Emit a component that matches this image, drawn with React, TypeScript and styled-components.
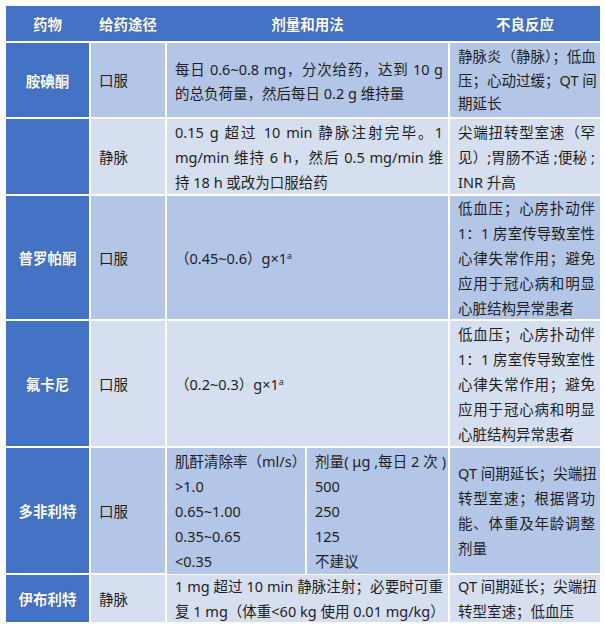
import React from 'react'
import styled, { createGlobalStyle } from 'styled-components'

const BLUE = '#4472C4'
const tones = {
  dark: '#B4C6E7',
  light: '#D6DFF0',
}

type Tone = keyof typeof tones

const COLUMNS = '83px 74px 281px 150px'

const GlobalStyle = createGlobalStyle`
  html, body {
    margin: 0;
    padding: 0;
    background: #ffffff;
  }
  body {
    font-family: "Noto Sans", "Noto Sans CJK SC", sans-serif;
    font-size: 14.5px;
    color: #1e1e1e;
  }
`

const Page = styled.div`
  padding: 6px 5px 6px 6px;
`

const Table = styled.div`
  display: grid;
  width: 594px;
  grid-template-columns: ${COLUMNS};
  grid-template-rows: 35px 74px 75px 123px 125px 125px 47px;
  gap: 2px;
  background: #ffffff;
`

const HeaderRow = styled.div`
  grid-column: 1 / -1;
  display: grid;
  grid-template-columns: ${COLUMNS};
  column-gap: 2px;
  background: ${BLUE};
`

const HeadCell = styled.div`
  display: flex;
  align-items: center;
  justify-content: center;
  color: #ffffff;
  font-weight: 700;
  text-shadow: 0 0 1px rgba(20, 40, 90, 0.6);
`

const NameCell = styled(HeadCell)`
  background: ${BLUE};
`

const Cell = styled.div<{ $tone: Tone; $leading?: number }>`
  display: flex;
  flex-direction: column;
  justify-content: center;
  padding: 1px 5px 0 8px;
  background: ${({ $tone }) => tones[$tone]};
  line-height: ${({ $leading }) => $leading ?? 25}px;
`

const Split = styled.div`
  display: grid;
  grid-template-columns: 138px 141px;
  column-gap: 2px;
`

const SubCell = styled(Cell)`
  padding: 1px 2px 0 8px;
`

const Line = styled.span<{ $fill?: boolean }>`
  display: block;
  white-space: nowrap;
  text-align: justify;
  text-align-last: ${({ $fill }) => ($fill ? 'justify' : 'left')};
`

const Sup = styled.sup`
  font-size: 0.6em;
  line-height: 0;
  vertical-align: 0.55em;
`

const Lines: React.FC<{ items: string[]; fillLast?: boolean }> = ({ items, fillLast }) => (
  <>
    {items.map((text, i) => (
      <Line key={i} $fill={fillLast || i < items.length - 1}>
        {text}
      </Line>
    ))}
  </>
)

const warning = [
  '低血压；心房扑动伴',
  '1：1 房室传导致室性',
  '心律失常作用；避免',
  '应用于冠心病和明显',
  '心脏结构异常患者',
]

export default function App() {
  return (
    <>
      <GlobalStyle />
      <Page>
        <Table lang="zh-CN">
          <HeaderRow>
            <HeadCell>药物</HeadCell>
            <HeadCell>给药途径</HeadCell>
            <HeadCell>剂量和用法</HeadCell>
            <HeadCell>不良反应</HeadCell>
          </HeaderRow>

          <NameCell>胺碘酮</NameCell>
          <Cell $tone="dark">口服</Cell>
          <Cell $tone="dark" $leading={24}>
            <Lines items={['每日 0.6~0.8 mg，分次给药，达到 10 g', '的总负荷量，然后每日 0.2 g 维持量']} />
          </Cell>
          <Cell $tone="dark" $leading={23.5}>
            <Lines items={['静脉炎（静脉）；低血', '压；心动过缓；QT 间', '期延长']} />
          </Cell>

          <NameCell />
          <Cell $tone="light">静脉</Cell>
          <Cell $tone="light">
            <Lines
              items={[
                '0.15 g 超过 10 min 静脉注射完毕。1',
                'mg/min 维持 6 h，然后 0.5 mg/min 维',
                '持 18 h 或改为口服给药',
              ]}
            />
          </Cell>
          <Cell $tone="light">
            <Lines items={['尖端扭转型室速（罕', '见）;胃肠不适 ;便秘 ;', 'INR 升高']} />
          </Cell>

          <NameCell>普罗帕酮</NameCell>
          <Cell $tone="dark">口服</Cell>
          <Cell $tone="dark">
            <Line>
              （0.45~0.6）g×1<Sup>a</Sup>
            </Line>
          </Cell>
          <Cell $tone="dark">
            <Lines items={warning} />
          </Cell>

          <NameCell>氟卡尼</NameCell>
          <Cell $tone="light">口服</Cell>
          <Cell $tone="light">
            <Line>
              （0.2~0.3）g×1<Sup>a</Sup>
            </Line>
          </Cell>
          <Cell $tone="light">
            <Lines items={warning} />
          </Cell>

          <NameCell>多非利特</NameCell>
          <Cell $tone="dark">口服</Cell>
          <Split>
            <SubCell $tone="dark">
              <Lines items={['肌酐清除率（ml/s）', '>1.0', '0.65~1.00', '0.35~0.65', '<0.35']} />
            </SubCell>
            <SubCell $tone="dark">
              <Lines items={['剂量( μg ,每日 2 次 )', '500', '250', '125', '不建议']} />
            </SubCell>
          </Split>
          <Cell $tone="dark">
            <Lines items={['QT 间期延长；尖端扭', '转型室速；根据肾功', '能、体重及年龄调整', '剂量']} />
          </Cell>

          <NameCell>伊布利特</NameCell>
          <Cell $tone="light">静脉</Cell>
          <Cell $tone="light">
            <Lines items={['1 mg 超过 10 min 静脉注射；必要时可重', '复 1 mg（体重<60 kg 使用 0.01 mg/kg）']} fillLast />
          </Cell>
          <Cell $tone="light">
            <Lines items={['QT 间期延长；尖端扭', '转型室速；低血压']} />
          </Cell>
        </Table>
      </Page>
    </>
  )
}
